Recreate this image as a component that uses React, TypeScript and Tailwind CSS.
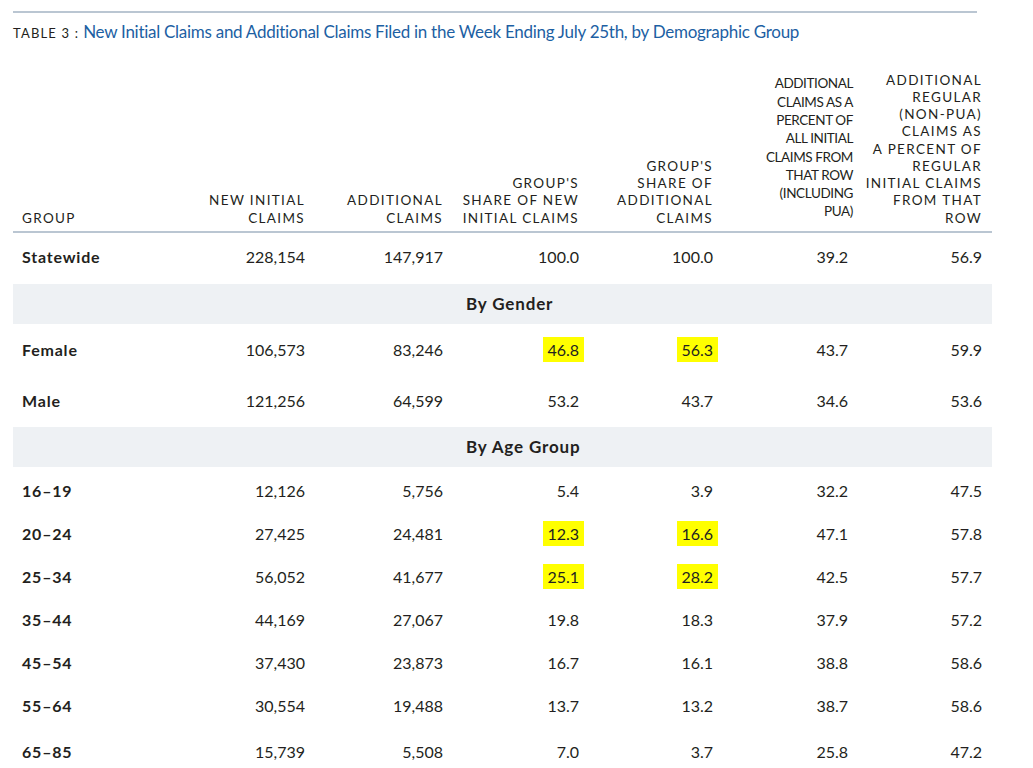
import React from "react";

type Row = {
  label: string;
  values: string[];
  marks?: number[];
};

const COLS =
  "grid grid-cols-[192px_100px_138px_136px_134px_140px_129px] pr-[10px]";

const statewide: Row = {
  label: "Statewide",
  values: ["228,154", "147,917", "100.0", "100.0", "39.2", "56.9"],
};

const gender: Row[] = [
  { label: "Female", values: ["106,573", "83,246", "46.8", "56.3", "43.7", "59.9"], marks: [2, 3] },
  { label: "Male", values: ["121,256", "64,599", "53.2", "43.7", "34.6", "53.6"] },
];

const ages: Row[] = [
  { label: "16–19", values: ["12,126", "5,756", "5.4", "3.9", "32.2", "47.5"] },
  { label: "20–24", values: ["27,425", "24,481", "12.3", "16.6", "47.1", "57.8"], marks: [2, 3] },
  { label: "25–34", values: ["56,052", "41,677", "25.1", "28.2", "42.5", "57.7"], marks: [2, 3] },
  { label: "35–44", values: ["44,169", "27,067", "19.8", "18.3", "37.9", "57.2"] },
  { label: "45–54", values: ["37,430", "23,873", "16.7", "16.1", "38.8", "58.6"] },
  { label: "55–64", values: ["30,554", "19,488", "13.7", "13.2", "38.7", "58.6"] },
  { label: "65–85", values: ["15,739", "5,508", "7.0", "3.7", "25.8", "47.2"] },
];

function DataRow({ row, height }: { row: Row; height: string }) {
  return (
    <div className={`${COLS} ${height} items-center text-[16px] text-[#231f20]`}>
      <div className="pl-[9px] font-bold tracking-[0.05em]">{row.label}</div>
      {row.values.map((v, i) => {
        const marked = row.marks?.includes(i);
        return (
          <div key={i} className={`text-right ${i === 4 ? "pr-[5px]" : ""}`}>
            {marked ? (
              <span className="-mr-[5px] inline-block bg-[#ffff00] py-[3px] pl-[4px] pr-[5px] leading-[19px]">
                {v}
              </span>
            ) : (
              v
            )}
          </div>
        );
      })}
    </div>
  );
}

function Band({ title }: { title: string }) {
  return (
    <div className="flex h-[40px] items-center bg-[#eef1f4] pl-[453px] text-[17px] font-bold tracking-[0.05em] text-[#231f20]">
      {title}
    </div>
  );
}

export default function App() {
  return (
    <div className="h-[768px] w-[1033px] overflow-hidden bg-white font-['Lato',sans-serif]">
      <div className="ml-[13px] w-[979px]">
        {/* top rule */}
        <div className="mt-[11px] h-[2px] w-[964px] bg-[#bac6d2]" />

        {/* caption */}
        <div className="mt-[9px] flex items-baseline">
          <span className="text-[13px] tracking-[0.09em] text-[#231f20]">TABLE 3 :</span>
          <span className="ml-[4px] text-[17px] leading-[20px] tracking-[-0.016em] text-[#1d5fa3]">
            New Initial Claims and Additional Claims Filed in the Week Ending July 25th, by Demographic Group
          </span>
        </div>

        {/* header */}
        <div
          className={`${COLS} mt-[28px] items-end pb-[4px] text-right text-[13.5px] uppercase leading-[17.25px] tracking-[0.1em] text-[#231f20]`}
        >
          <div className="pl-[9px] text-left">Group</div>
          <div>
            New Initial
            <br />
            Claims
          </div>
          <div>
            Additional
            <br />
            Claims
          </div>
          <div>
            Group's
            <br />
            Share of New
            <br />
            Initial Claims
          </div>
          <div>
            Group's
            <br />
            Share of
            <br />
            Additional
            <br />
            Claims
          </div>
          <div className="pb-[6px] leading-[18.3px] tracking-[-0.03em]">
            Additional
            <br />
            Claims as a
            <br />
            Percent of
            <br />
            All Initial
            <br />
            Claims From
            <br />
            That Row
            <br />
            (Including
            <br />
            PUA)
          </div>
          <div>
            Additional
            <br />
            Regular
            <br />
            (Non-PUA)
            <br />
            Claims as
            <br />
            a Percent of
            <br />
            Regular
            <br />
            Initial Claims
            <br />
            From That
            <br />
            Row
          </div>
        </div>
        <div className="h-[2px] bg-[#bac6d2]" />

        <DataRow row={statewide} height="h-[51px] pb-[3px]" />
        <Band title="By Gender" />
        {gender.map((r) => (
          <DataRow key={r.label} row={r} height="h-[51.5px]" />
        ))}
        <Band title="By Age Group" />
        <div className="h-[2.5px]" />
        {ages.map((r, i) => (
          <DataRow key={r.label} row={r} height={i === ages.length - 1 ? "h-[49px]" : "h-[43px]"} />
        ))}
      </div>
    </div>
  );
}
